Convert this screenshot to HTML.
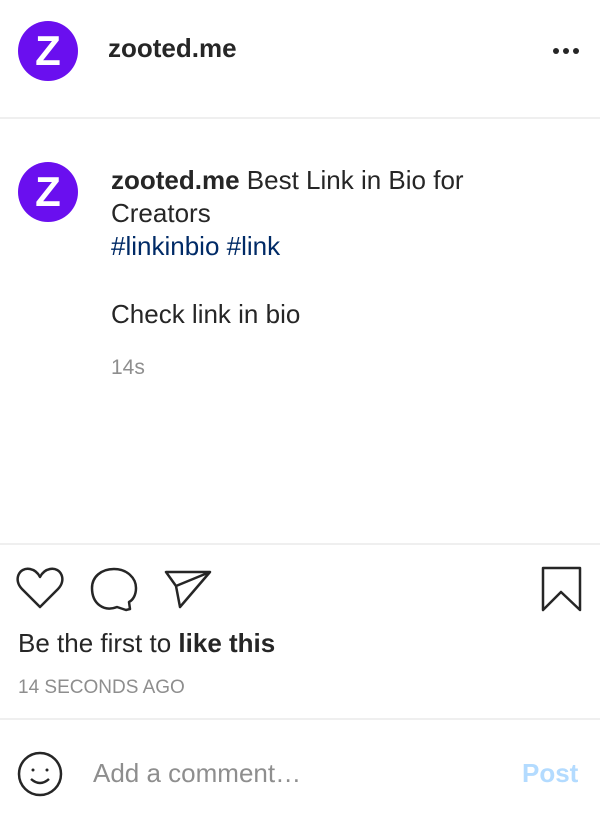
<!DOCTYPE html>
<html><head><style>
body{margin:0;width:600px;height:816px;background:#fff;font-family:"Liberation Sans",Arial,Helvetica,sans-serif;color:#262626;position:relative;overflow:hidden}
.a{position:absolute;white-space:nowrap}
.av{width:60px;height:60px;border-radius:50%;background:#6a0fef;color:#fff;font-size:42px;font-weight:bold;text-align:center;line-height:60px;font-family:"Liberation Sans",Arial,sans-serif}
.hr{position:absolute;left:0;width:600px;height:2px;background:#efefef}
</style></head><body>
<div class="a av" style="left:18px;top:21px">Z</div>
<div class="a" style="left:108px;top:33px;font-size:26px;font-weight:bold">zooted.me</div>
<svg class="a" style="left:550px;top:45px" width="32" height="12"><circle cx="6" cy="6" r="3" fill="#262626"/><circle cx="16" cy="6" r="3" fill="#262626"/><circle cx="26" cy="6" r="3" fill="#262626"/></svg>
<div class="hr" style="top:117px"></div>
<div class="a av" style="left:18px;top:162px">Z</div>
<div class="a" style="left:111px;top:164px;font-size:26px;line-height:33px;width:440px">
<b>zooted.me</b> Best Link in Bio for<br>Creators<br><span style="color:#002a66">#linkinbio #link</span><br><br><span style="position:relative;top:2px">Check link in bio</span></div>
<div class="a" style="left:111px;top:356px;font-size:21px;color:#8e8e8e">14s</div>
<div class="hr" style="top:543px"></div>
<svg class="a" style="left:0;top:550px" width="600" height="70" fill="none" stroke="#262626" stroke-width="2.5" stroke-linejoin="round">
<path d="M40 57 L22 39 C13 30 19 17 30 19 C35 20 38 23 40 27 C42 23 45 20 50 19 C61 17 67 30 58 39 Z"/>
<path d="M126 60 L117 57 C104 62 92 54 92 38 C92 27 101 19 114 19 C127 19 136 28 136 38 C136 45 133 50 129 52 L130 59 Z"/>
<path d="M166 22 L210 22 L180 57 L176 36 Z M176 36 L210 22"/>
<path d="M543 18 L580 18 L580 60 L561 42 L543 60 Z"/>
</svg>
<div class="a" style="left:18px;top:628px;font-size:26px">Be the first to <b>like this</b></div>
<div class="a" style="left:18px;top:677px;font-size:19px;color:#8e8e8e">14 SECONDS AGO</div>
<div class="hr" style="top:718px"></div>
<svg class="a" style="left:16px;top:750px" width="50" height="50" fill="none" stroke="#262626" stroke-width="2.5">
<circle cx="24" cy="24" r="21"/>
<circle cx="17" cy="20" r="1.5" fill="#262626" stroke="none"/><circle cx="31" cy="20" r="1.5" fill="#262626" stroke="none"/>
<path d="M15 29 Q24 37 33 29"/>
</svg>
<div class="a" style="left:93px;top:758px;font-size:26px;color:#8e8e8e">Add a comment…</div>
<div class="a" style="left:522px;top:758px;font-size:26px;font-weight:bold;color:#b3dbff">Post</div>
</body></html>
